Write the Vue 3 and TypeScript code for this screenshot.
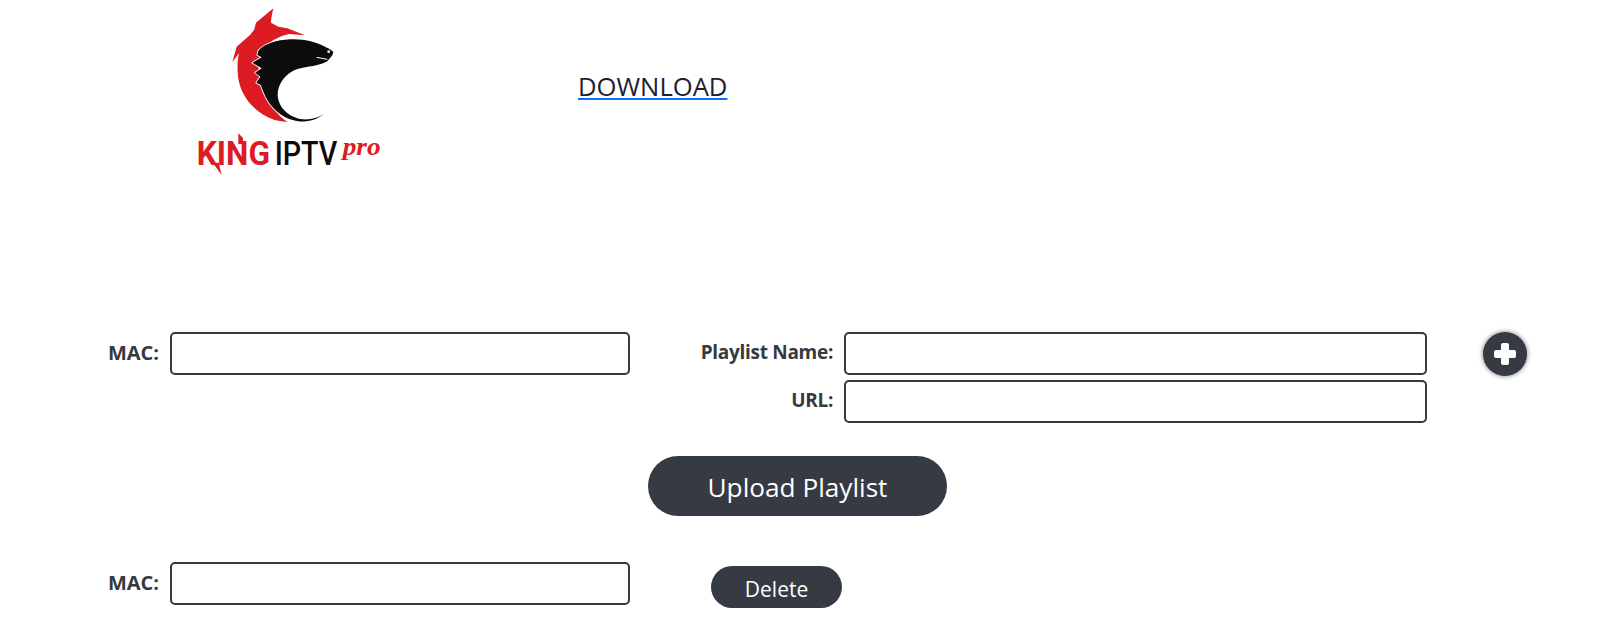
<script setup lang="ts">
const macLabel = 'MAC:'
</script>

<template>
  <div class="page">
    <header class="top">
      <svg class="logo" viewBox="0 0 720 570" role="img" aria-label="King IPTV pro">
        <path
          class="red"
          d="M310 25 C305 45 303 60 303 68 L325 80 L352 85 L405 106 L358 102 C310 112 272 140 265 190 C265 260 300 330 352 366 C280 365 205 300 203 215 C202 195 203 175 207 160 L187 186 L200 140 L240 105 L252 90 L258 68 Z"
        />
        <path
          class="black wolf"
          d="M265 152 C285 130 320 120 360 118 C410 116 455 130 490 155 L487 166 L472 184 C450 198 410 200 385 206 C345 218 322 255 323 285 C325 330 370 362 415 358 C430 357 445 352 462 342 C440 360 410 367 385 364 C340 358 300 325 282 280 L272 255 L259 248 L271 230 L255 218 L275 205 L247 188 L275 172 L262 165 Z"
        />
        <path class="mouth" d="M440 172 L472 178" />
        <circle class="eye" cx="476" cy="155" r="4" />
        <text class="mark red" x="80" y="494" textLength="220" lengthAdjust="spacingAndGlyphs">KING</text>
        <path class="red" d="M205 432 L205 400 L219 414 L219 432 Z M128 488 L155 525 L146 488 Z" />
        <text class="mark thin black" x="314" y="494" textLength="188" lengthAdjust="spacingAndGlyphs">IPTV</text>
        <text class="pro red" x="518" y="465" textLength="114" lengthAdjust="spacingAndGlyphs">pro</text>
      </svg>
      <a class="download" href="#">DOWNLOAD</a>
    </header>

    <form class="form" @submit.prevent>
      <div class="upload-row">
        <div class="field mac">
          <label>{{ macLabel }}</label>
          <input type="text" />
        </div>
        <div class="playlist">
          <div class="field named">
            <label>Playlist Name:</label>
            <input type="text" />
          </div>
          <div class="field named">
            <label>URL:</label>
            <input type="text" />
          </div>
        </div>
        <button class="add" type="button" aria-label="Add playlist">
          <svg viewBox="0 0 22 22" width="22" height="22">
            <rect x="7" y="0" width="8" height="22" rx="2" />
            <rect x="0" y="7" width="22" height="8" rx="2" />
          </svg>
        </button>
      </div>

      <button class="upload" type="submit">Upload Playlist</button>

      <div class="delete-row">
        <div class="field mac">
          <label>{{ macLabel }}</label>
          <input type="text" />
        </div>
        <button class="delete" type="button">Delete</button>
      </div>
    </form>
  </div>
</template>

<style>
body {
  background: #fff;
  margin: 0;
}
</style>

<style scoped>
.page {
  color: #343a40;
  font-family: "Open Sans", "Noto Sans", sans-serif;
  height: 624px;
  overflow: hidden;
  width: 1600px;
}

.top {
  align-items: flex-start;
  display: flex;
  height: 190px;
  padding-left: 170px;
}

.logo {
  display: block;
  height: 190px;
  width: 240px;
}

.red {
  fill: #dc1c22;
}

.black {
  fill: #0c0c0c;
}

.wolf {
  paint-order: stroke;
  stroke: #fff;
  stroke-linejoin: round;
  stroke-width: 5px;
}

.mouth {
  fill: none;
  stroke: #fff;
  stroke-width: 3px;
}

.eye {
  fill: #fff;
}

.mark {
  font-family: Roboto, "Liberation Sans", sans-serif;
  font-size: 100px;
  font-weight: 700;
}

.thin {
  font-weight: 500;
}

.pro {
  font-family: "Liberation Serif", serif;
  font-size: 78px;
  font-style: italic;
  font-weight: 700;
}

.download {
  color: #1b2233;
  font-size: 25.6px;
  margin: 69px 0 0 168px;
  text-decoration-color: #0d6efd;
}

.form {
  margin-top: 142px;
}

.upload-row {
  align-items: flex-start;
  display: flex;
}

.field {
  align-items: center;
  display: flex;
  gap: 11px;
}

.field label {
  font-weight: 700;
  padding-bottom: 3px;
  text-align: right;
  white-space: nowrap;
}

.field input {
  background: #fff;
  border: 2px solid #343a40;
  border-radius: 5px;
  box-sizing: border-box;
  height: 43px;
}

.mac {
  flex: none;
  width: 630px;
}

.mac label {
  font-size: 20px;
  width: 159px;
}

.mac input {
  width: 460px;
}

.playlist {
  display: flex;
  flex: none;
  flex-direction: column;
  gap: 5px;
  width: 797px;
}

.named label {
  font-size: 19px;
  letter-spacing: -0.3px;
  width: 203px;
}

.named input {
  width: 583px;
}

.add {
  align-items: center;
  background: #363a43;
  border: 0;
  border-radius: 50%;
  box-shadow: 0 0 5px rgba(0, 0, 0, 0.55);
  display: flex;
  height: 44px;
  justify-content: center;
  margin-left: 56px;
  padding: 0;
  width: 44px;
}

.add svg {
  fill: #fff;
}

.upload,
.delete {
  background: #363a43;
  border: 0;
  color: #fff;
  font-family: inherit;
  padding: 2px 0 0;
}

.upload {
  border-radius: 30px;
  display: block;
  font-size: 26.2px;
  height: 60px;
  margin: 33px 0 0 648px;
  width: 299px;
}

.delete-row {
  align-items: flex-start;
  display: flex;
  margin-top: 46px;
}

.delete {
  border-radius: 21px;
  font-size: 21px;
  height: 42px;
  margin: 4px 0 0 81px;
  padding-top: 3px;
  width: 131px;
}
</style>
